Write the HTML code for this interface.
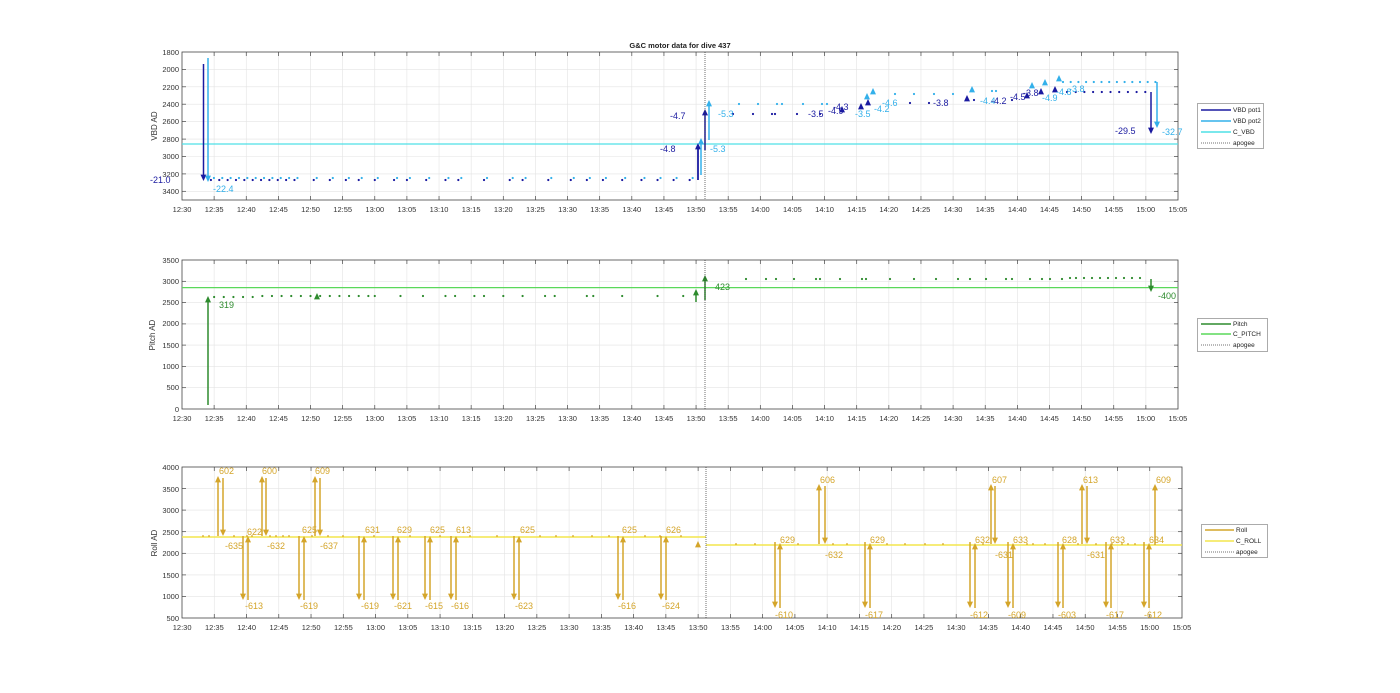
<!DOCTYPE html>
<html><head><meta charset="utf-8"><style>
body{margin:0;background:#fff;width:1400px;height:693px;overflow:hidden;position:relative;font-family:"Liberation Sans",Arial,sans-serif}
svg{position:absolute;left:0;top:0}
.xl{position:absolute;display:flex;font-size:7.5px;color:#333}
.xl span{display:block;text-align:center}
</style></head><body>
<svg id="s" width="1400" height="693" viewBox="0 0 1400 693" font-family="Liberation Sans,Arial,sans-serif">
<g id="g"></g>
<text x="680" y="48" font-size="7.5" font-weight="bold" text-anchor="middle" fill="#222">G&amp;C motor data for dive 437</text>
<g font-size="7.5" fill="#333" text-anchor="end">
<text x="179" y="55">1800</text><text x="179" y="72">2000</text><text x="179" y="90">2200</text><text x="179" y="107">2400</text><text x="179" y="124">2600</text><text x="179" y="142">2800</text><text x="179" y="159">3000</text><text x="179" y="177">3200</text><text x="179" y="194">3400</text>
<text x="179" y="263">3500</text><text x="179" y="284">3000</text><text x="179" y="305">2500</text><text x="179" y="326">2000</text><text x="179" y="348">1500</text><text x="179" y="369">1000</text><text x="179" y="390">500</text><text x="179" y="412">0</text>
<text x="179" y="470">4000</text><text x="179" y="492">3500</text><text x="179" y="513">3000</text><text x="179" y="535">2500</text><text x="179" y="556">2000</text><text x="179" y="578">1500</text><text x="179" y="599">1000</text><text x="179" y="621">500</text>
</g>
<g font-size="8" fill="#333" text-anchor="middle">
<text transform="translate(157,126) rotate(-90)">VBD AD</text>
<text transform="translate(155,335) rotate(-90)">Pitch AD</text>
<text transform="translate(157,543) rotate(-90)">Roll AD</text>
</g>
<!-- top annotations -->
<g font-size="9">
<text x="150" y="183" fill="#1a1aa0">-21.0</text>
<text x="213" y="192" fill="#33b0ea">-22.4</text>
<text x="660" y="152" fill="#1a1aa0">-4.8</text>
<text x="710" y="152" fill="#33b0ea">-5.3</text>
<text x="670" y="119" fill="#1a1aa0">-4.7</text>
<text x="718" y="117" fill="#33b0ea">-5.3</text>
<text x="808" y="117" fill="#1a1aa0">-3.5</text>
<text x="828" y="114" fill="#1a1aa0">-4.9</text>
<text x="833" y="110" fill="#1a1aa0">-4.3</text>
<text x="855" y="117" fill="#33b0ea">-3.5</text>
<text x="874" y="112" fill="#33b0ea">-4.2</text>
<text x="882" y="106" fill="#33b0ea">-4.6</text>
<text x="933" y="106" fill="#1a1aa0">-3.8</text>
<text x="980" y="104" fill="#33b0ea">-4.4</text>
<text x="991" y="104" fill="#1a1aa0">-4.2</text>
<text x="1010" y="100" fill="#1a1aa0">-4.5</text>
<text x="1023" y="96" fill="#1a1aa0">-3.8</text>
<text x="1042" y="101" fill="#33b0ea">-4.9</text>
<text x="1056" y="95" fill="#33b0ea">-4.8</text>
<text x="1069" y="92" fill="#33b0ea">-3.8</text>
<text x="1115" y="134" fill="#1a1aa0">-29.5</text>
<text x="1162" y="135" fill="#33b0ea">-32.7</text>
</g>
<g font-size="9" fill="#2e8b2e">
<text x="219" y="308">319</text><text x="715" y="290">423</text><text x="1158" y="299">-400</text>
</g>
<g font-size="9" fill="#d4a52a">
<text x="219" y="474">602</text><text x="225" y="549">-635</text>
<text x="262" y="474">600</text><text x="267" y="549">-632</text>
<text x="315" y="474">609</text><text x="320" y="549">-637</text>
<text x="247" y="535">622</text><text x="245" y="609">-613</text>
<text x="302" y="533">625</text><text x="300" y="609">-619</text>
<text x="365" y="533">631</text><text x="361" y="609">-619</text>
<text x="397" y="533">629</text><text x="394" y="609">-621</text>
<text x="430" y="533">625</text><text x="425" y="609">-615</text>
<text x="456" y="533">613</text><text x="451" y="609">-616</text>
<text x="520" y="533">625</text><text x="515" y="609">-623</text>
<text x="622" y="533">625</text><text x="618" y="609">-616</text>
<text x="666" y="533">626</text><text x="662" y="609">-624</text>
<text x="780" y="543">629</text><text x="775" y="618">-610</text>
<text x="870" y="543">629</text><text x="865" y="618">-617</text>
<text x="975" y="543">632</text><text x="970" y="618">-612</text>
<text x="1013" y="543">633</text><text x="1008" y="618">-609</text>
<text x="1062" y="543">628</text><text x="1058" y="618">-603</text>
<text x="1110" y="543">633</text><text x="1106" y="618">-617</text>
<text x="1149" y="543">634</text><text x="1144" y="618">-612</text>
<text x="820" y="483">606</text><text x="825" y="558">-632</text>
<text x="992" y="483">607</text><text x="995" y="558">-631</text>
<text x="1083" y="483">613</text><text x="1087" y="558">-631</text>
<text x="1156" y="483">609</text>
</g>
<!-- legends -->
<g font-size="6.5" fill="#222">
<rect x="1197.5" y="103.5" width="66" height="45" fill="#fff" stroke="#888" stroke-width="0.7"/>
<line x1="1201" y1="110" x2="1231" y2="110" stroke="#1a1aa0" stroke-width="1.5"/><text x="1233" y="112">VBD pot1</text>
<line x1="1201" y1="121" x2="1231" y2="121" stroke="#33b0ea" stroke-width="1.5"/><text x="1233" y="123">VBD pot2</text>
<line x1="1201" y1="132" x2="1231" y2="132" stroke="#4fe0e6" stroke-width="1.5"/><text x="1233" y="134">C_VBD</text>
<line x1="1201" y1="143" x2="1231" y2="143" stroke="#444" stroke-width="0.7" stroke-dasharray="1,1"/><text x="1233" y="145">apogee</text>
<rect x="1197.5" y="318.5" width="70" height="33" fill="#fff" stroke="#888" stroke-width="0.7"/>
<line x1="1201" y1="324" x2="1231" y2="324" stroke="#2e8b2e" stroke-width="1.5"/><text x="1233" y="326">Pitch</text>
<line x1="1201" y1="334" x2="1231" y2="334" stroke="#5ad85a" stroke-width="1.5"/><text x="1233" y="336">C_PITCH</text>
<line x1="1201" y1="345" x2="1231" y2="345" stroke="#444" stroke-width="0.7" stroke-dasharray="1,1"/><text x="1233" y="347">apogee</text>
<rect x="1201.5" y="524.5" width="66" height="33" fill="#fff" stroke="#888" stroke-width="0.7"/>
<line x1="1205" y1="530" x2="1234" y2="530" stroke="#d4a52a" stroke-width="1.5"/><text x="1236" y="532">Roll</text>
<line x1="1205" y1="541" x2="1234" y2="541" stroke="#f3e64d" stroke-width="1.5"/><text x="1236" y="543">C_ROLL</text>
<line x1="1205" y1="552" x2="1234" y2="552" stroke="#444" stroke-width="0.7" stroke-dasharray="1,1"/><text x="1236" y="554">apogee</text>
</g>
</svg>
<div class="xl" style="left:166px;top:205px"><span>12:30</span><span>12:35</span><span>12:40</span><span>12:45</span><span>12:50</span><span>12:55</span><span>13:00</span><span>13:05</span><span>13:10</span><span>13:15</span><span>13:20</span><span>13:25</span><span>13:30</span><span>13:35</span><span>13:40</span><span>13:45</span><span>13:50</span><span>13:55</span><span>14:00</span><span>14:05</span><span>14:10</span><span>14:15</span><span>14:20</span><span>14:25</span><span>14:30</span><span>14:35</span><span>14:40</span><span>14:45</span><span>14:50</span><span>14:55</span><span>15:00</span><span>15:05</span></div>
<div class="xl" style="left:166px;top:414px"><span>12:30</span><span>12:35</span><span>12:40</span><span>12:45</span><span>12:50</span><span>12:55</span><span>13:00</span><span>13:05</span><span>13:10</span><span>13:15</span><span>13:20</span><span>13:25</span><span>13:30</span><span>13:35</span><span>13:40</span><span>13:45</span><span>13:50</span><span>13:55</span><span>14:00</span><span>14:05</span><span>14:10</span><span>14:15</span><span>14:20</span><span>14:25</span><span>14:30</span><span>14:35</span><span>14:40</span><span>14:45</span><span>14:50</span><span>14:55</span><span>15:00</span><span>15:05</span></div>
<div class="xl" id="xb" style="left:166px;top:623px"><span>12:30</span><span>12:35</span><span>12:40</span><span>12:45</span><span>12:50</span><span>12:55</span><span>13:00</span><span>13:05</span><span>13:10</span><span>13:15</span><span>13:20</span><span>13:25</span><span>13:30</span><span>13:35</span><span>13:40</span><span>13:45</span><span>13:50</span><span>13:55</span><span>14:00</span><span>14:05</span><span>14:10</span><span>14:15</span><span>14:20</span><span>14:25</span><span>14:30</span><span>14:35</span><span>14:40</span><span>14:45</span><span>14:50</span><span>14:55</span><span>15:00</span><span>15:05</span></div>
<script>
document.querySelectorAll('.xl').forEach(function(d,i){d.querySelectorAll('span').forEach(function(s){s.style.width=(i==2?32.26:32.13)+'px';});});
var g=document.getElementById('g'),h='';
function L(x1,y1,x2,y2,c,w,da){h+='<line x1="'+x1+'" y1="'+y1+'" x2="'+x2+'" y2="'+y2+'" stroke="'+c+'" stroke-width="'+w+'"'+(da?' stroke-dasharray="'+da+'"':'')+'/>';}
function D(x,y,c,r){h+='<circle cx="'+x+'" cy="'+y+'" r="'+(r||1.1)+'" fill="'+c+'"/>';}
function T(x,y,c,up,s){s=s||4;var d=up?1:-1;h+='<polygon points="'+(x-s*0.75)+','+(y+d*s*1.6)+' '+(x+s*0.75)+','+(y+d*s*1.6)+' '+x+','+y+'" fill="'+c+'"/>';}
function A(x,y1,y2,c,w){var up=y2<y1;L(x,y1,x,y2+(up?5:-5),c,w||1.5);T(x,y2,c,up);}
function axes(x0,x1,y0,y1,yt){
 var n=31,dx=(x1-x0)/n;
 for(var i=1;i<n;i++){var x=x0+i*dx;L(x,y0,x,y1,'#e3e3e3',0.6);L(x,y0,x,y0+4,'#444',0.7);L(x,y1,x,y1-4,'#444',0.7);}
 yt.forEach(function(y){L(x0,y,x1,y,'#e3e3e3',0.6);L(x0,y,x0+4,y,'#444',0.7);L(x1,y,x1-4,y,'#444',0.7);});
 h+='<rect x="'+x0+'" y="'+y0+'" width="'+(x1-x0)+'" height="'+(y1-y0)+'" fill="none" stroke="#444" stroke-width="0.8"/>';
}
axes(182,1178,52,200,[69.4,86.8,104.2,121.6,139.1,156.5,173.9,191.3]);
axes(182,1178,260,409,[281.3,302.6,323.9,345.1,366.4,387.7]);
axes(182,1182,467,618,[488.6,510.1,531.7,553.3,574.9,596.4]);
var DK='#1a1aa0',LB='#33b0ea',CY='#4fe0e6',GR='#2e8b2e',RO='#d4a52a',YE='#f3e64d';
function X(t){return 182+t*6.426;}
// TOP
L(182,144,1178,144,CY,1.2);
var tt=[];for(var t=4.5;t<18.6;t+=1.3)tt.push(t);tt=tt.concat([20.5,23,25.5,27.5,30,33,35,38,41,43,47,51,53,57,60.5,63,65.5,68.5,71.5,74,76.5,79]);
tt.forEach(function(t){D(X(t),180,DK);D(X(t)+3,178,LB);});
A(203.5,64,181,DK);A(208,58,182,LB);
A(698,180,143,DK,1.8);A(701,175,138,LB);A(705,150,109,DK);A(709,140,100,LB);
[733,753,772,775,797,820].forEach(function(x){D(x,114,DK);});[910,929].forEach(function(x){D(x,103,DK);});[974,1012].forEach(function(x){D(x,100,DK);});
for(var x=1067;x<1146;x+=8.7)D(x,92,DK);
[739,758,777,782,803,822,827].forEach(function(x){D(x,104,LB);});[895,914,934,953].forEach(function(x){D(x,94,LB);});[992,996].forEach(function(x){D(x,91,LB);});
for(var x=1063;x<1156;x+=7.7)D(x,82,LB);
[[842,106],[861,103],[868,99],[967,95],[1027,92],[1041,88],[1055,86]].forEach(function(p){T(p[0],p[1],DK,1,4);});
[[867,93],[873,88],[972,86],[1032,82],[1045,79],[1059,75]].forEach(function(p){T(p[0],p[1],LB,1,4);});
A(1151,92,134,DK,1.5);A(1157,82,128,LB,1.5);
L(705,52,705,200,'#333',0.7,'1,1');
// MIDDLE
L(182,287.6,1178,287.6,'#5ad85a',1.2);
var pt=[5,6.5,8,9.5,11,12.5,14,15.5,17,18.5,20,21.5,23,24.5,26,27.5,29,30,34,37.5,41,42.5,45.5,47,50,53,56.5,58,63,64,68.5,74,78,81.5,82,87,90.5,93,95.5,100,104.5,106,111,113,117,121,126,129,130];
pt.forEach(function(t){var x=X(t);if(x<690)D(x,297+(t>12?-1:0),GR);});
[746,766,776,794,816,820,840,862,866,890,914,936,958,970,986,1006,1012,1030,1042,1050,1062,1070,1076,1084,1092,1100,1108,1116,1124,1132,1140].forEach(function(x,i){D(x,279-(i>20?1:0),GR);});
A(208,405,296,GR,1.5);T(317,293,GR,1,4);A(696,302,289,GR,1.5);A(705,300,275,GR,1.5);A(1151,279,292,GR,1.5);
L(705,260,705,409,'#333',0.7,'1,1');
// BOTTOM
function XB(t){return 182+t*6.452;}
L(182,537,706,537,YE,1.5);L(706,545,1182,545,YE,1.5);
[203,209,234,247,252,270,276,283,289,312,328,343,374,410,440,470,497,540,556,573,592,609,645,660,681].forEach(function(x){D(x,536,RO,0.9);});
[736,755,798,833,847,887,905,925,943,983,1027,1033,1045,1078,1096,1112,1122,1128,1135].forEach(function(x){D(x,544,RO,0.9);});
[[218,223],[262,266],[315,320]].forEach(function(p){A(p[0],536,476,RO,1.5);A(p[1],478,536,RO,1.5);});
[243,299,359,393,425,451,514,618,661].forEach(function(x){A(x,536,600,RO,1.5);A(x+5,600,536,RO,1.5);});
T(698,541,RO,1,4);
[775,865,970,1008,1058,1106,1144].forEach(function(x){A(x,542,608,RO,1.5);A(x+5,608,543,RO,1.5);});
[[819,825],[991,995],[1082,1087]].forEach(function(p){A(p[0],544,484,RO,1.5);A(p[1],486,544,RO,1.5);});
A(1155,545,484,RO,1.5);
L(706,467,706,618,'#333',0.7,'1,1');
g.innerHTML=h;
</script>
</body></html>
